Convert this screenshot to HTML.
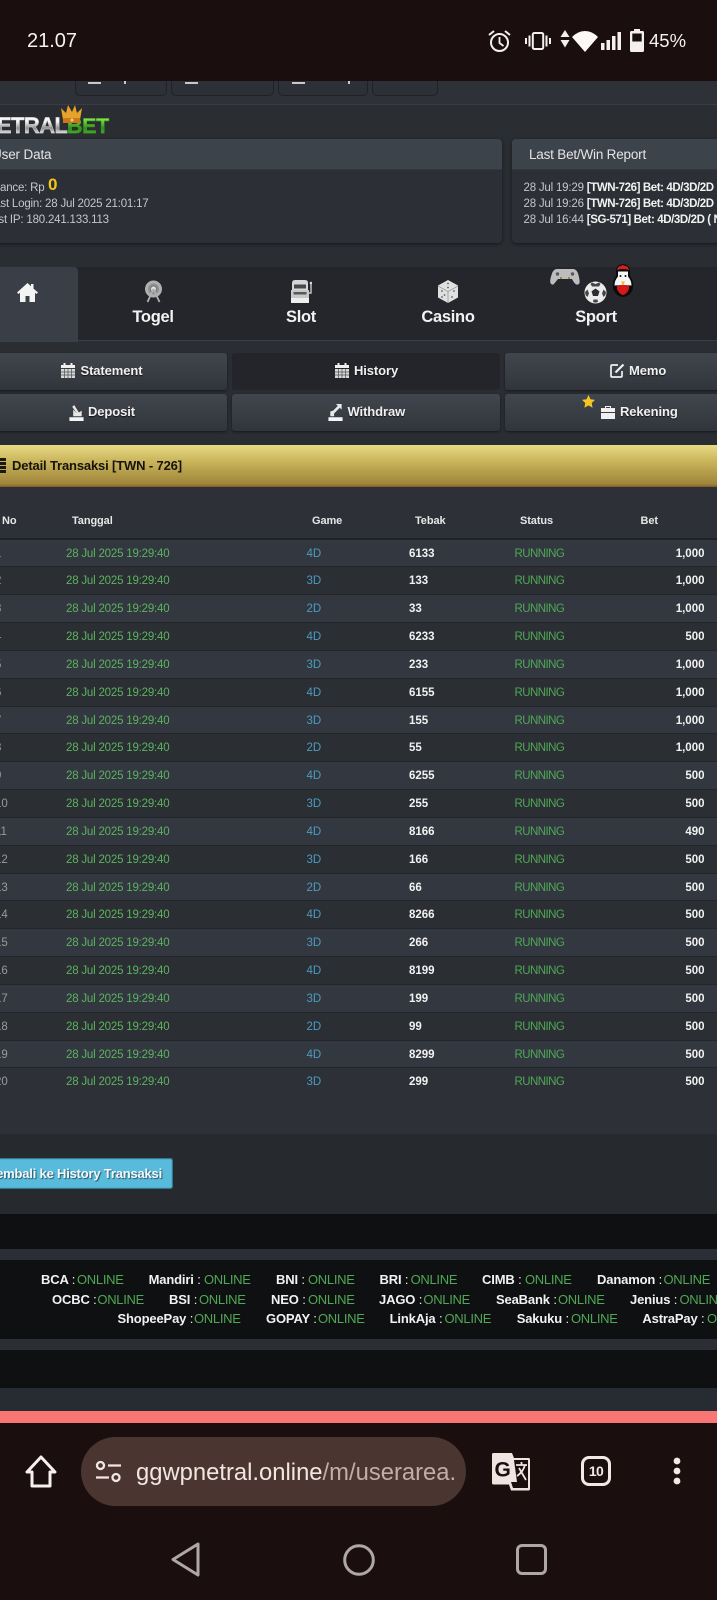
<!DOCTYPE html>
<html><head><meta charset="utf-8"><title>NetralBet</title>
<style>
html,body{margin:0;padding:0;background:#2a2d32;overflow:hidden;width:717px;height:1600px}
body{position:relative;font-family:"Liberation Sans",sans-serif;color:#e8e8e8}
#w{position:absolute;left:0;top:0;width:717px;height:1600px;overflow:hidden;filter:blur(.3px)}
.a{position:absolute}
.t{position:absolute;white-space:nowrap;line-height:16px}
.r{position:absolute;left:0;width:717px;height:27.84px;line-height:27.84px;font-size:11.5px;box-sizing:border-box;border-bottom:1px solid #22252a;background:#2b2e33}
.r.o{background:#33373f}
.r span{position:absolute;white-space:nowrap;top:1px}
.n{left:-5px;color:#9a9a9a}
.d{left:66px;color:#5cb360;letter-spacing:-.2px}
.g{left:306.5px;color:#4a9cc0}
.v{left:409px;color:#f2f2f2;font-weight:bold}
.s{left:514.5px;color:#4fa857;letter-spacing:-.55px;font-size:11.5px}
.b{right:12.5px;color:#f2f2f2;font-weight:bold}
.h{position:absolute;top:513px;line-height:16px;font-size:11px;font-weight:bold;color:#e6e6e6;white-space:nowrap;letter-spacing:-.1px}
.btn{position:absolute;box-sizing:border-box;height:37px;background:linear-gradient(#41464e,#31353b);border-radius:3px;box-shadow:0 1px 2px #16181a}
.bt{position:absolute;white-space:nowrap;font-size:13px;font-weight:bold;color:#f0f0f0;line-height:16px;text-shadow:0 1px 1px #111;letter-spacing:-.1px}
.nl{position:absolute;top:308px;width:120px;text-align:center;font-size:16.5px;font-weight:bold;color:#f2f2f2;line-height:18px;letter-spacing:-.3px}
.k{position:absolute;white-space:nowrap;line-height:16px;font-size:13px;font-weight:bold;color:#f2f2f2;letter-spacing:-.15px}
.k i{font-weight:normal;font-style:normal}
.o2{position:absolute;white-space:nowrap;line-height:16px;font-size:13px;color:#50a755;letter-spacing:-.3px}
.p{position:absolute;white-space:nowrap;line-height:16px;font-size:11.5px;color:#c4c6c8;letter-spacing:-.2px}
.p b{color:#f2f2f2;letter-spacing:-.4px}
.tab{position:absolute;top:70px;height:26px;box-sizing:border-box;background:#2d3137;border:1px solid #1f2125;border-radius:0 0 5px 5px}
</style></head>
<body><div id="w">
<!-- top content -->
<div class="a" style="left:0;top:81px;width:717px;height:23px;background:#2e3238"></div>
<div class="a" style="left:0;top:104px;width:717px;height:1px;background:#3a3e44"></div>
<div class="tab" style="left:75px;width:92px"></div>
<div class="tab" style="left:171px;width:103px"></div>
<div class="tab" style="left:278px;width:90px"></div>
<div class="tab" style="left:372px;width:66px"></div>
<div class="a" style="left:88px;top:82px;width:13px;height:1.5px;background:#c8c8c8"></div>
<div class="a" style="left:124px;top:81px;width:2px;height:3px;background:#c8c8c8"></div>
<div class="a" style="left:185px;top:82px;width:13px;height:1.5px;background:#c8c8c8"></div>
<div class="a" style="left:292px;top:82px;width:13px;height:1.5px;background:#c8c8c8"></div>
<div class="a" style="left:348px;top:81px;width:2px;height:3px;background:#c8c8c8"></div>

<!-- logo -->
<div class="t" style="left:-3px;top:115px;line-height:22px;font-size:22px;font-weight:bold;letter-spacing:-.6px;-webkit-text-stroke:.4px #cfcfcf;background:linear-gradient(#f8f8f8 30%,#8d8d8d 60%,#e8e8e8 85%);-webkit-background-clip:text;background-clip:text;color:transparent">ETRAL</div>
<div class="t" style="left:67px;top:115px;line-height:22px;font-size:21.5px;font-weight:bold;letter-spacing:-.4px;-webkit-text-stroke:.4px #3f9f1f;background:linear-gradient(#7fe04a 20%,#2f8f18 60%,#54c02a);-webkit-background-clip:text;background-clip:text;color:transparent">BET</div>
<svg class="a" style="left:60px;top:105px" width="24" height="19" viewBox="0 0 24 19"><path d="M3 15 1 3l5 5 2-8 4 7 3-7 2 8 5-5-2 12z" fill="#e6a22a"/><path d="M3 13h17v5H3z" fill="#c9781e"/><circle cx="12" cy="15" r="1.5" fill="#f6d860"/></svg>

<!-- panels -->
<div class="a" style="left:-6px;top:139px;width:508px;height:104px;background:#2c3036;border-radius:4px;box-shadow:0 1px 3px #15171a"></div>
<div class="a" style="left:-6px;top:139px;width:508px;height:30px;background:#3d434b;border-radius:4px 4px 0 0;border-bottom:1px solid #33373d"></div>
<div class="a" style="left:512px;top:139px;width:215px;height:104px;background:#2c3036;border-radius:4px;box-shadow:0 1px 3px #15171a"></div>
<div class="a" style="left:512px;top:139px;width:215px;height:30px;background:#3d434b;border-radius:4px 4px 0 0;border-bottom:1px solid #33373d"></div>
<div class="t" style="left:-8px;top:147px;font-size:13.5px;letter-spacing:-.15px;color:#e4e4e4">User Data</div>
<div class="t" style="left:529px;top:147px;font-size:13.5px;letter-spacing:-.2px;color:#e4e4e4">Last Bet/Win Report</div>
<div class="p" style="left:-16px;top:180px">Balance: Rp</div>
<div class="t" style="left:48px;top:177px;font-size:17px;font-weight:bold;color:#f5c518">0</div>
<div class="p" style="left:-12px;top:196px">Last Login: 28 Jul 2025 21:01:17</div>
<div class="p" style="left:-14px;top:212px">Last IP: 180.241.133.113</div>
<div class="p" style="left:523.5px;top:180px">28 Jul 19:29 <b>[TWN-726] Bet: 4D/3D/2D</b></div>
<div class="p" style="left:523.5px;top:196px">28 Jul 19:26 <b>[TWN-726] Bet: 4D/3D/2D</b></div>
<div class="p" style="left:523.5px;top:212px">28 Jul 16:44 <b>[SG-571] Bet: 4D/3D/2D ( N</b></div>

<!-- nav -->
<div class="a" style="left:0;top:267px;width:717px;height:74px;background:#24262b;border-bottom:1px solid #3b3f45;box-sizing:border-box"></div>
<div class="a" style="left:-6px;top:267px;width:84px;height:75px;background:#3a3f47;border-radius:4px 4px 0 0"></div>
<svg class="a" style="left:17px;top:282px" width="21" height="20" viewBox="0 0 21 20"><path d="M10.5 1 0 10.5l1.5 1.5L3 10.8V20h5.5v-6h4v6H18v-9.200l1.500 1.200 1.500-1.500L16.500 6.600V2h-2.500v2.300z" fill="#f4f4f4"/></svg>
<!-- ferris wheel -->
<svg class="a" style="left:144px;top:280px" width="19" height="23" viewBox="0 0 19 23" fill="none" stroke="#b0b0b0"><circle cx="9.500" cy="9" r="7" fill="#8f8f8f" stroke-width="3"/><circle cx="9.500" cy="9" r="3" fill="#e0e0e0" stroke="#777" stroke-width="1"/><path d="M9.500 9 3.500 22M9.500 9l6 13" stroke-width="1.800"/></svg>
<!-- slot -->
<svg class="a" style="left:291px;top:280px" width="21" height="23" viewBox="0 0 21 23"><path d="M1 3q0-3 3-3h10q3 0 3 3v7H1z" fill="#d4d4d4"/><rect x="3" y="4.500" width="12" height="4" fill="#44474c"/><rect x="0" y="10" width="18" height="8" fill="#c8c8c8"/><rect x="2.500" y="12" width="13" height="2.500" fill="#55585c"/><rect x="0" y="18" width="18" height="5" fill="#eeeeee"/><path d="M18 13h2V4" stroke="#c8c8c8" stroke-width="1.400" fill="none"/><circle cx="20" cy="3" r="1.300" fill="#d8d8d8"/></svg>
<!-- dice -->
<svg class="a" style="left:437px;top:280px" width="22" height="23" viewBox="0 0 22 23"><path d="M11 0 21 5.500v12L11 23 1 17.500v-12z" fill="#e0e0e0"/><path d="M1 6l10 5.500L21 6M11 11.500V23" stroke="#888" stroke-width=".7" fill="none"/><g fill="#5e6064"><circle cx="11" cy="3.500" r=".9"/><circle cx="11" cy="7.500" r=".9"/><circle cx="5" cy="11" r=".9"/><circle cx="7.500" cy="15" r=".9"/><circle cx="5" cy="17" r=".9"/><circle cx="17" cy="11" r=".9"/><circle cx="15" cy="17" r=".9"/></g></svg>
<!-- gamepad -->
<svg class="a" style="left:550px;top:268px" width="30" height="17" viewBox="0 0 30 17"><path d="M7 1h16q4 0 5.500 6t1 8q-1 2-3 1.500T22 11H8l-4.500 5.500Q1.500 17 .5 15t1-8Q3 1 7 1z" fill="#bdbdbd"/><circle cx="7.500" cy="6" r="1.700" fill="#55585c"/><circle cx="22.500" cy="6" r="1.700" fill="#55585c"/><circle cx="11" cy="10" r="1" fill="#8a7a20"/><circle cx="19" cy="10" r="1" fill="#8a7a20"/></svg>
<!-- ball -->
<svg class="a" style="left:584px;top:281px" width="23" height="23" viewBox="0 0 23 23"><circle cx="11.500" cy="11.500" r="11" fill="#ececec"/><path d="M11.500 7.500l4 2.900-1.500 4.600H9l-1.500-4.600z" fill="#2b2d30"/><path d="M8 1.500l3.500 1.500 3.500-1.500 1.500 1.500-1.500 2.500h-7L6.500 3zM1 11l2.500-2.500 1.500 4-1.500 3.500-2-2zM22 11l-2.500-2.500-1.500 4 1.500 3.500 2-2zM9 21l.5-2.500h4L14 21l-2.500.8z" fill="#44464a"/></svg>
<!-- rooster -->
<svg class="a" style="left:612px;top:264px" width="22" height="33" viewBox="0 0 22 33"><path d="M11 0Q4 1 4 7v5Q0 17 1 24q2 8 10 9 8-1 10-9 1-7-3-12V7q0-6-7-7z" fill="#0c0c0c"/><path d="M5 6q1-4 3.500-4L11 1l2.500 1Q16 2 17 6q-6-2-12 0z" fill="#d32020"/><path d="M6 7.500h10v5q3.500 4 3.500 9L11 21l-8.500.5q0-5 3.500-9z" fill="#f6f6f6"/><circle cx="8.500" cy="12" r="1" fill="#111"/><circle cx="13.500" cy="12" r="1" fill="#111"/><path d="M5 22q6-2.500 12 0v3q-2 5-6 6-4-1-6-6z" fill="#d71818"/><path d="M9 17.500h4l-2 4z" fill="#f0c020"/></svg>
<div class="nl" style="left:93px">Togel</div>
<div class="nl" style="left:241px">Slot</div>
<div class="nl" style="left:388px">Casino</div>
<div class="nl" style="left:536px">Sport</div>

<!-- buttons -->
<div class="btn" style="left:-6px;top:353px;width:233px"></div>
<div class="btn" style="left:232px;top:353px;width:268px;background:#23252a;box-shadow:none"></div>
<div class="btn" style="left:505px;top:353px;width:220px"></div>
<div class="btn" style="left:-6px;top:394px;width:233px"></div>
<div class="btn" style="left:232px;top:394px;width:268px"></div>
<div class="btn" style="left:505px;top:394px;width:220px"></div>

<svg class="a" style="left:61px;top:363px" width="14" height="15" viewBox="0 0 14 15"><path d="M0 2h2.500V0h2v2h5V0h2v2H14v3H0z" fill="#f0f0f0"/><path d="M0 6h14v9H0z" fill="#d8d8d8"/><path d="M3.500 6v9M7 6v9M10.500 6v9M0 9h14M0 12h14" stroke="#4a4d52" stroke-width=".7"/></svg>
<div class="bt" style="left:80.500px;top:363px">Statement</div>
<svg class="a" style="left:335px;top:363px" width="14" height="15" viewBox="0 0 14 15"><path d="M0 2h2.500V0h2v2h5V0h2v2H14v3H0z" fill="#f0f0f0"/><path d="M0 6h14v9H0z" fill="#d8d8d8"/><path d="M3.500 6v9M7 6v9M10.500 6v9M0 9h14M0 12h14" stroke="#4a4d52" stroke-width=".7"/></svg>
<div class="bt" style="left:354px;top:363px">History</div>
<svg class="a" style="left:610px;top:363px" width="15" height="15" viewBox="0 0 15 15" fill="none" stroke="#f0f0f0" stroke-width="1.700"><path d="M8 2H2q-1 0-1 1v10q0 1 1 1h9q1 0 1-1V8"/><path d="M5.500 9.500 13.500 1.500" stroke-width="2.200"/></svg>
<div class="bt" style="left:629px;top:363px">Memo</div>
<svg class="a" style="left:69px;top:404px" width="15" height="17" viewBox="0 0 15 18"><path d="M0 14h15v4H0z" fill="#f4f4f4"/><path d="M4 6v7h9V7l-3 2L5 1 3 3l5 7z" fill="#e8e8e8"/></svg>
<div class="bt" style="left:88px;top:404px">Deposit</div>
<svg class="a" style="left:328px;top:404px" width="15" height="17" viewBox="0 0 15 18"><path d="M0 14h15v4H0z" fill="#f4f4f4"/><path d="M2 13V8l3-1 5-5-2-2h6v6l-2-2-6 6v3z" fill="#e8e8e8"/></svg>
<div class="bt" style="left:347.500px;top:404px">Withdraw</div>
<svg class="a" style="left:582px;top:395px" width="13" height="13" viewBox="0 0 13 13"><path d="M6.500 0l2 4.300 4.500.6-3.300 3.100.9 4.700-4.100-2.300-4.100 2.300.9-4.700L0 4.900l4.500-.6z" fill="#f5c527"/></svg>
<svg class="a" style="left:601px;top:405px" width="14" height="14" viewBox="0 0 14 14"><path d="M0 3h4V1h6v2h4v4H0zM0 8h14v6H0z" fill="#f0f0f0"/><rect x="5" y="2" width="4" height="1" fill="#3a3e44"/></svg>
<div class="bt" style="left:620px;top:404px">Rekening</div>

<!-- gold bar -->
<div class="a" style="left:0;top:445px;width:717px;height:42px;background:linear-gradient(#e8da85 0,#c9b35a 40%,#9f863a 92%,#8c6230 100%)"></div>
<svg class="a" style="left:0;top:458px" width="7" height="15" viewBox="0 0 7 15"><path d="M0 0h6v3H0zM0 4h6v3H0zM0 8h6v3H0zM0 12h6v3H0z" fill="#1c1a10"/></svg>
<div class="t" style="left:12px;top:458px;font-size:13px;font-weight:bold;letter-spacing:-.15px;color:#15140c">Detail Transaksi [TWN - 726]</div>

<!-- table -->
<div class="a" style="left:0;top:487px;width:717px;height:647px;background:#2d3137;box-shadow:0 1px 2px #191b1e"></div>
<div class="a" style="left:0;top:1134px;width:717px;height:80px;background:#26292e"></div>
<span class="h" style="left:2px">No</span>
<span class="h" style="left:72px">Tanggal</span>
<span class="h" style="left:312px">Game</span>
<span class="h" style="left:415px">Tebak</span>
<span class="h" style="left:520px">Status</span>
<span class="h" style="left:640.500px">Bet</span>
<div class="a" style="left:0;top:537.500px;width:717px;height:2px;background:#1f2226"></div>

<div class="r o" style="top:539.500px"><span class="n">1</span><span class="d">28 Jul 2025 19:29:40</span><span class="g">4D</span><span class="v">6133</span><span class="s">RUNNING</span><span class="b">1,000</span></div>
<div class="r" style="top:567.340px"><span class="n">2</span><span class="d">28 Jul 2025 19:29:40</span><span class="g">3D</span><span class="v">133</span><span class="s">RUNNING</span><span class="b">1,000</span></div>
<div class="r o" style="top:595.180px"><span class="n">3</span><span class="d">28 Jul 2025 19:29:40</span><span class="g">2D</span><span class="v">33</span><span class="s">RUNNING</span><span class="b">1,000</span></div>
<div class="r" style="top:623.020px"><span class="n">4</span><span class="d">28 Jul 2025 19:29:40</span><span class="g">4D</span><span class="v">6233</span><span class="s">RUNNING</span><span class="b">500</span></div>
<div class="r o" style="top:650.860px"><span class="n">5</span><span class="d">28 Jul 2025 19:29:40</span><span class="g">3D</span><span class="v">233</span><span class="s">RUNNING</span><span class="b">1,000</span></div>
<div class="r" style="top:678.700px"><span class="n">6</span><span class="d">28 Jul 2025 19:29:40</span><span class="g">4D</span><span class="v">6155</span><span class="s">RUNNING</span><span class="b">1,000</span></div>
<div class="r o" style="top:706.540px"><span class="n">7</span><span class="d">28 Jul 2025 19:29:40</span><span class="g">3D</span><span class="v">155</span><span class="s">RUNNING</span><span class="b">1,000</span></div>
<div class="r" style="top:734.380px"><span class="n">8</span><span class="d">28 Jul 2025 19:29:40</span><span class="g">2D</span><span class="v">55</span><span class="s">RUNNING</span><span class="b">1,000</span></div>
<div class="r o" style="top:762.220px"><span class="n">9</span><span class="d">28 Jul 2025 19:29:40</span><span class="g">4D</span><span class="v">6255</span><span class="s">RUNNING</span><span class="b">500</span></div>
<div class="r" style="top:790.060px"><span class="n">10</span><span class="d">28 Jul 2025 19:29:40</span><span class="g">3D</span><span class="v">255</span><span class="s">RUNNING</span><span class="b">500</span></div>
<div class="r o" style="top:817.900px"><span class="n">11</span><span class="d">28 Jul 2025 19:29:40</span><span class="g">4D</span><span class="v">8166</span><span class="s">RUNNING</span><span class="b">490</span></div>
<div class="r" style="top:845.740px"><span class="n">12</span><span class="d">28 Jul 2025 19:29:40</span><span class="g">3D</span><span class="v">166</span><span class="s">RUNNING</span><span class="b">500</span></div>
<div class="r o" style="top:873.580px"><span class="n">13</span><span class="d">28 Jul 2025 19:29:40</span><span class="g">2D</span><span class="v">66</span><span class="s">RUNNING</span><span class="b">500</span></div>
<div class="r" style="top:901.420px"><span class="n">14</span><span class="d">28 Jul 2025 19:29:40</span><span class="g">4D</span><span class="v">8266</span><span class="s">RUNNING</span><span class="b">500</span></div>
<div class="r o" style="top:929.260px"><span class="n">15</span><span class="d">28 Jul 2025 19:29:40</span><span class="g">3D</span><span class="v">266</span><span class="s">RUNNING</span><span class="b">500</span></div>
<div class="r" style="top:957.100px"><span class="n">16</span><span class="d">28 Jul 2025 19:29:40</span><span class="g">4D</span><span class="v">8199</span><span class="s">RUNNING</span><span class="b">500</span></div>
<div class="r o" style="top:984.940px"><span class="n">17</span><span class="d">28 Jul 2025 19:29:40</span><span class="g">3D</span><span class="v">199</span><span class="s">RUNNING</span><span class="b">500</span></div>
<div class="r" style="top:1012.780px"><span class="n">18</span><span class="d">28 Jul 2025 19:29:40</span><span class="g">2D</span><span class="v">99</span><span class="s">RUNNING</span><span class="b">500</span></div>
<div class="r o" style="top:1040.620px"><span class="n">19</span><span class="d">28 Jul 2025 19:29:40</span><span class="g">4D</span><span class="v">8299</span><span class="s">RUNNING</span><span class="b">500</span></div>
<div class="r" style="top:1068.460px;background:#2d3137;border-bottom:0"><span class="n">20</span><span class="d">28 Jul 2025 19:29:40</span><span class="g">3D</span><span class="v">299</span><span class="s">RUNNING</span><span class="b">500</span></div>

<!-- back button -->
<div class="a" style="left:-6px;top:1158px;width:179px;height:31px;background:#58bbdc;border-radius:3px;box-shadow:0 0 1px 1px #2f6b82 inset"></div>
<div class="t" style="right:555px;top:1166px;font-size:13px;font-weight:bold;letter-spacing:-.2px;color:#f4f8fa;text-shadow:1px 1px 1px #2a5468">Kembali ke History Transaksi</div>

<!-- footer bands -->
<div class="a" style="left:0;top:1214px;width:717px;height:35px;background:#0f1011"></div>
<div class="a" style="left:0;top:1249px;width:717px;height:11px;background:#2b2f35"></div>
<div class="a" style="left:0;top:1260px;width:717px;height:79px;background:#0f1011"></div>
<div class="a" style="left:0;top:1339px;width:717px;height:11px;background:#2b2f35"></div>
<div class="a" style="left:0;top:1350px;width:717px;height:38px;background:#0f1011"></div>
<div class="a" style="left:0;top:1388px;width:717px;height:23px;background:#272c32"></div>
<div class="a" style="left:0;top:1411px;width:717px;height:12px;background:#f87674"></div>
<div class="a" style="left:0;top:1423px;width:717px;height:177px;background:#1a0f0e"></div>

<!-- bank status -->
<span class="k" style="left:41px;top:1272px">BCA <i>:</i></span><span class="o2" style="left:77px;top:1272px">ONLINE</span>
<span class="k" style="left:148.600px;top:1272px">Mandiri <i>:</i></span><span class="o2" style="left:204px;top:1272px">ONLINE</span>
<span class="k" style="left:276px;top:1272px">BNI <i>:</i></span><span class="o2" style="left:308px;top:1272px">ONLINE</span>
<span class="k" style="left:379.500px;top:1272px">BRI <i>:</i></span><span class="o2" style="left:410.600px;top:1272px">ONLINE</span>
<span class="k" style="left:482px;top:1272px">CIMB <i>:</i></span><span class="o2" style="left:525px;top:1272px">ONLINE</span>
<span class="k" style="left:597px;top:1272px">Danamon <i>:</i></span><span class="o2" style="left:663.500px;top:1272px">ONLINE</span>
<span class="k" style="left:52px;top:1292px">OCBC <i>:</i></span><span class="o2" style="left:97.400px;top:1292px">ONLINE</span>
<span class="k" style="left:169px;top:1292px">BSI <i>:</i></span><span class="o2" style="left:199px;top:1292px">ONLINE</span>
<span class="k" style="left:271px;top:1292px">NEO <i>:</i></span><span class="o2" style="left:308px;top:1292px">ONLINE</span>
<span class="k" style="left:379px;top:1292px">JAGO <i>:</i></span><span class="o2" style="left:423.400px;top:1292px">ONLINE</span>
<span class="k" style="left:496px;top:1292px">SeaBank <i>:</i></span><span class="o2" style="left:558px;top:1292px">ONLINE</span>
<span class="k" style="left:630px;top:1292px">Jenius <i>:</i></span><span class="o2" style="left:679.500px;top:1292px">ONLINE</span>
<span class="k" style="left:117.500px;top:1311px">ShopeePay <i>:</i></span><span class="o2" style="left:194px;top:1311px">ONLINE</span>
<span class="k" style="left:266px;top:1311px">GOPAY <i>:</i></span><span class="o2" style="left:318px;top:1311px">ONLINE</span>
<span class="k" style="left:389.600px;top:1311px">LinkAja <i>:</i></span><span class="o2" style="left:444.500px;top:1311px">ONLINE</span>
<span class="k" style="left:516.700px;top:1311px">Sakuku <i>:</i></span><span class="o2" style="left:571px;top:1311px">ONLINE</span>
<span class="k" style="left:642.400px;top:1311px">AstraPay <i>:</i></span><span class="o2" style="left:707px;top:1311px">ONLINE</span>

<!-- status bar -->
<div class="a" style="left:0;top:0;width:717px;height:81px;background:#1a0f0e"></div>
<div class="t" style="left:27px;top:31px;line-height:20px;font-size:20px;color:#f6f2f0">21.07</div>
<svg class="a" style="left:488px;top:29px" width="23" height="24" viewBox="0 0 23 24" fill="none" stroke="#f4f0ee" stroke-width="2"><circle cx="11.500" cy="13.500" r="8.500"/><path d="M11.500 8v6l4 3" stroke-width="1.800"/><path d="M1 6l5-4M22 6l-5-4"/></svg>
<svg class="a" style="left:525px;top:32px" width="26" height="18" viewBox="0 0 26 18"><rect x="7.800" y="1" width="10.400" height="16" rx="1.500" fill="none" stroke="#f4f0ee" stroke-width="2"/><path d="M0 6h2v6H0zM3.500 3.500h2v11h-2zM20.500 3.500h2v11h-2zM24 6h2v6h-2z" fill="#f4f0ee"/></svg>
<svg class="a" style="left:560px;top:30px" width="10" height="18" viewBox="0 0 10 18"><path d="M5 0l4.500 7h-9zM.5 10h9L5 17.500z" fill="#f4f0ee"/></svg>
<svg class="a" style="left:572px;top:30px" width="26" height="22" viewBox="0 0 26 22"><path d="M13 22 0 7q6-6 13-6t13 6z" fill="#fbf8f6"/></svg>
<svg class="a" style="left:601px;top:32px" width="20" height="18" viewBox="0 0 20 18"><path d="M0 11h3.500v7H0zM5.500 8H9v10H5.500zM11 4h3.500v14H11zM16.500 0H20v18h-3.500z" fill="#f4f0ee"/></svg>
<svg class="a" style="left:630px;top:29px" width="14" height="23" viewBox="0 0 14 23"><path d="M4 0h6v2h2.500q1.500 0 1.500 1.500v18q0 1.500-1.500 1.500h-11Q0 23 0 21.500v-18Q0 2 1.500 2H4z" fill="#f4f0ee"/><rect x="2.300" y="4.500" width="9.400" height="8" fill="#1a0f0e"/></svg>
<div class="t" style="left:649px;top:32px;line-height:18px;font-size:18.500px;color:#f6f2f0">45%</div>

<!-- browser bar -->
<svg class="a" style="left:25px;top:1455px" width="32" height="33" viewBox="0 0 32 33" fill="none" stroke="#f6f0ee" stroke-width="3" stroke-linejoin="round"><path d="M16 2 2 17h5v14h18V17h5z"/></svg>
<div class="a" style="left:81px;top:1437px;width:385px;height:69px;background:#4b3531;border-radius:35px"></div>
<svg class="a" style="left:95px;top:1461px" width="27" height="22" viewBox="0 0 27 22" fill="none" stroke="#f0e6e2" stroke-width="2.300"><circle cx="5.500" cy="4.500" r="3.500"/><path d="M13 4.500h13M1 16.500h13"/><circle cx="21" cy="16.500" r="3.500"/></svg>
<div class="t" style="left:136px;top:1458px;line-height:30px;font-size:23.800px;color:#bfaeaa"><span style="color:#f2e6e2">ggwpnetral.online</span>/m/userarea.</div>
<svg class="a" style="left:492px;top:1452px" width="39" height="39" viewBox="0 0 39 39"><path d="M1.500 1H20l2 5h14.500q1.500 0 1.500 1.500v29.500q0 1.500-1.500 1.500H19l-2-6H1.500Q0 32.500 0 31V2.500Q0 1 1.500 1z" fill="#f0e4e0"/><path d="M22 8h14v28H21l-2-6h6z" fill="#1a0f0e"/><text x="2.500" y="24.500" font-family="Liberation Sans,sans-serif" font-size="21" font-weight="bold" fill="#1a0f0e">G</text><path d="M24 13h11M29.500 10v3M33 13q-2 7-8 11M27 16l7 12" fill="none" stroke="#f0e4e0" stroke-width="1.800"/></svg>
<div class="a" style="left:581px;top:1456px;width:30px;height:30px;box-sizing:border-box;border:3px solid #f2e8e4;border-radius:8px;text-align:center;line-height:24px;font-size:14px;font-weight:bold;color:#f2e8e4;letter-spacing:-.6px">10</div>
<svg class="a" style="left:670px;top:1456px" width="14" height="32" viewBox="0 0 14 32"><g fill="#f2e8e4"><circle cx="7" cy="5" r="3.400"/><circle cx="7" cy="15" r="3.400"/><circle cx="7" cy="25" r="3.400"/></g></svg>

<!-- android nav -->
<svg class="a" style="left:170px;top:1542px" width="32" height="35" viewBox="0 0 32 35" fill="none" stroke="#ada8a6" stroke-width="3" stroke-linejoin="round"><path d="M28 2 3 17.500 28 33z"/></svg>
<svg class="a" style="left:343px;top:1544px" width="32" height="32" viewBox="0 0 32 32" fill="none" stroke="#ada8a6" stroke-width="3"><circle cx="16" cy="16" r="14.300"/></svg>
<div class="a" style="left:516px;top:1544px;width:31px;height:31px;box-sizing:border-box;border:3px solid #ada8a6;border-radius:6px"></div>
</div></body></html>
